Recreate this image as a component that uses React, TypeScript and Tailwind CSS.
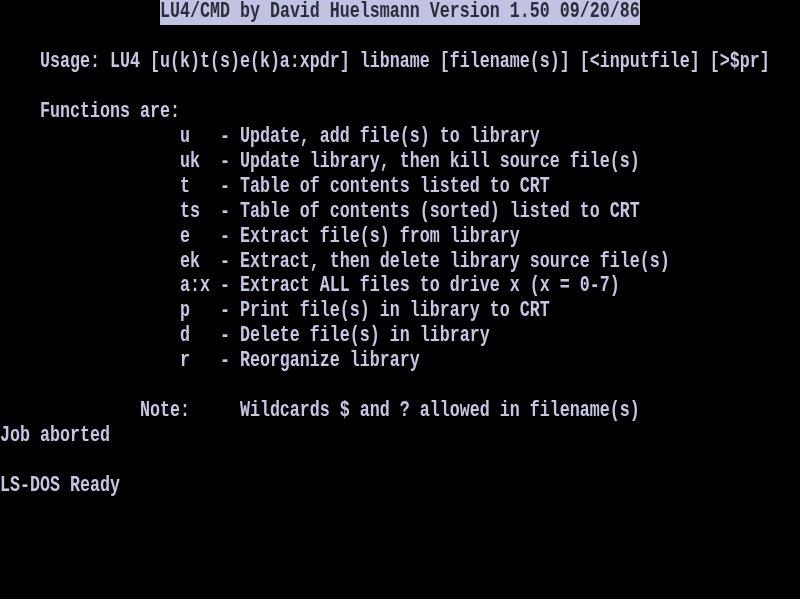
import React from "react";

const lines: string[] = [
  "",
  "",
  "    Usage: LU4 [u(k)t(s)e(k)a:xpdr] libname [filename(s)] [<inputfile] [>$pr]",
  "",
  "    Functions are:",
  "                  u   - Update, add file(s) to library",
  "                  uk  - Update library, then kill source file(s)",
  "                  t   - Table of contents listed to CRT",
  "                  ts  - Table of contents (sorted) listed to CRT",
  "                  e   - Extract file(s) from library",
  "                  ek  - Extract, then delete library source file(s)",
  "                  a:x - Extract ALL files to drive x (x = 0-7)",
  "                  p   - Print file(s) in library to CRT",
  "                  d   - Delete file(s) in library",
  "                  r   - Reorganize library",
  "",
  "              Note:     Wildcards $ and ? allowed in filename(s)",
  "Job aborted",
  "",
  "LS-DOS Ready",
];

export default function App() {
  return (
    <div
      className="w-[800px] h-[599px] bg-black overflow-hidden text-[#c6c6e4] text-[16.667px] whitespace-pre"
      style={{ fontFamily: '"Liberation Mono", "DejaVu Sans Mono", monospace' }}
    >
      <div className="blur-[0.4px]">
        {lines.map((l, i) => (
          <div key={i} className="h-[24.958px] leading-[24.958px]">
            {i === 0 ? (
              <>
                <span className="inline-block">{"                "}</span>
                <span className="inline-block bg-[#c2c2e2] text-[#2c2c3c] h-[24.958px] align-top">
                  <span className="inline-block scale-y-[1.3] font-bold">
                    LU4/CMD by David Huelsmann Version 1.50 09/20/86
                  </span>
                </span>
              </>
            ) : (
              <span className="inline-block scale-y-[1.36] font-bold">{l}</span>
            )}
          </div>
        ))}
      </div>
    </div>
  );
}
